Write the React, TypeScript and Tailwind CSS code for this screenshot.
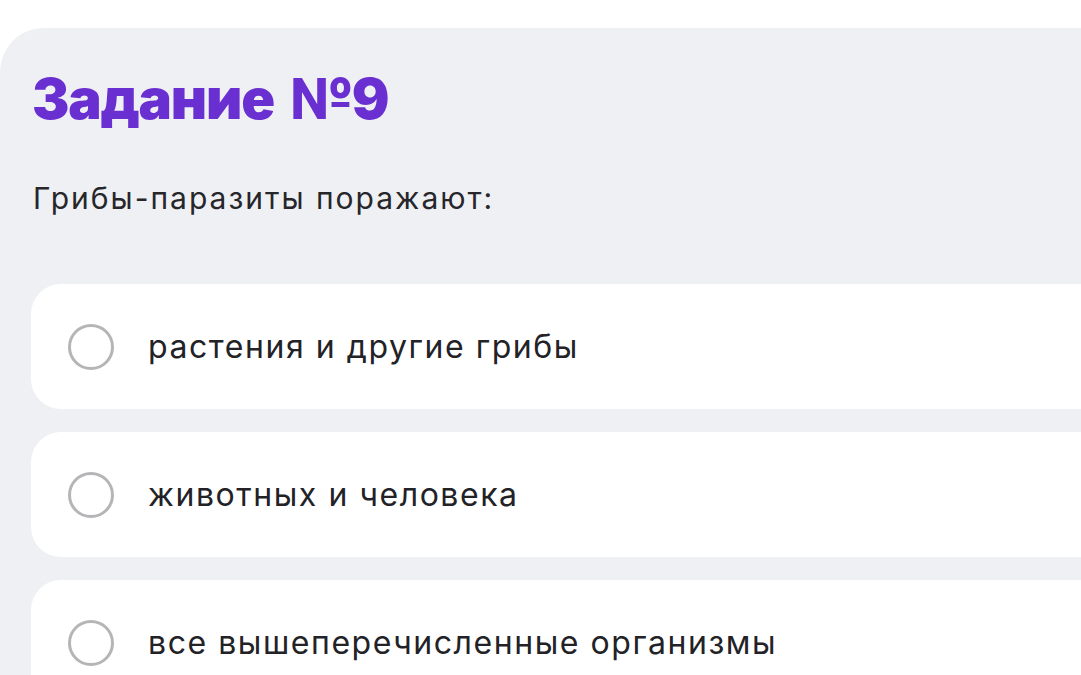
import React from 'react';

const options = [
  'растения и другие грибы',
  'животных и человека',
  'все вышеперечисленные организмы',
];

export default function App() {
  return (
    <div className="min-h-screen bg-white pt-[28px] overflow-hidden" style={{ fontFamily: 'Inter, "Noto Sans", sans-serif' }}>
      <div className="bg-[#eff0f3] rounded-tl-[44px] pl-[31px] pt-[42px] min-h-[700px]">
        <h1 className="pl-[1px] text-[56px] leading-[58px] font-black text-[#6a2fd0] tracking-[-1.2px] [word-spacing:7px]">
          Задание №9
        </h1>
        <p className="pl-[2px] mt-[50px] text-[30px] leading-[40px] text-[#26262b] tracking-[2px]">
          Грибы-паразиты поражают:
        </p>

        <div className="mt-[66px] flex flex-col gap-[23px]">
          {options.map((option) => (
            <div key={option} className="h-[125px] bg-white rounded-l-[30px] flex items-center pl-[37px]">
              <span className="w-[46px] h-[46px] rounded-full border-[3px] border-[#b5b5b8] shrink-0" />
              <span className="ml-[34px] text-[32px] leading-[40px] text-[#222227] tracking-[1.55px]">
                {option}
              </span>
            </div>
          ))}
        </div>
      </div>
    </div>
  );
}
